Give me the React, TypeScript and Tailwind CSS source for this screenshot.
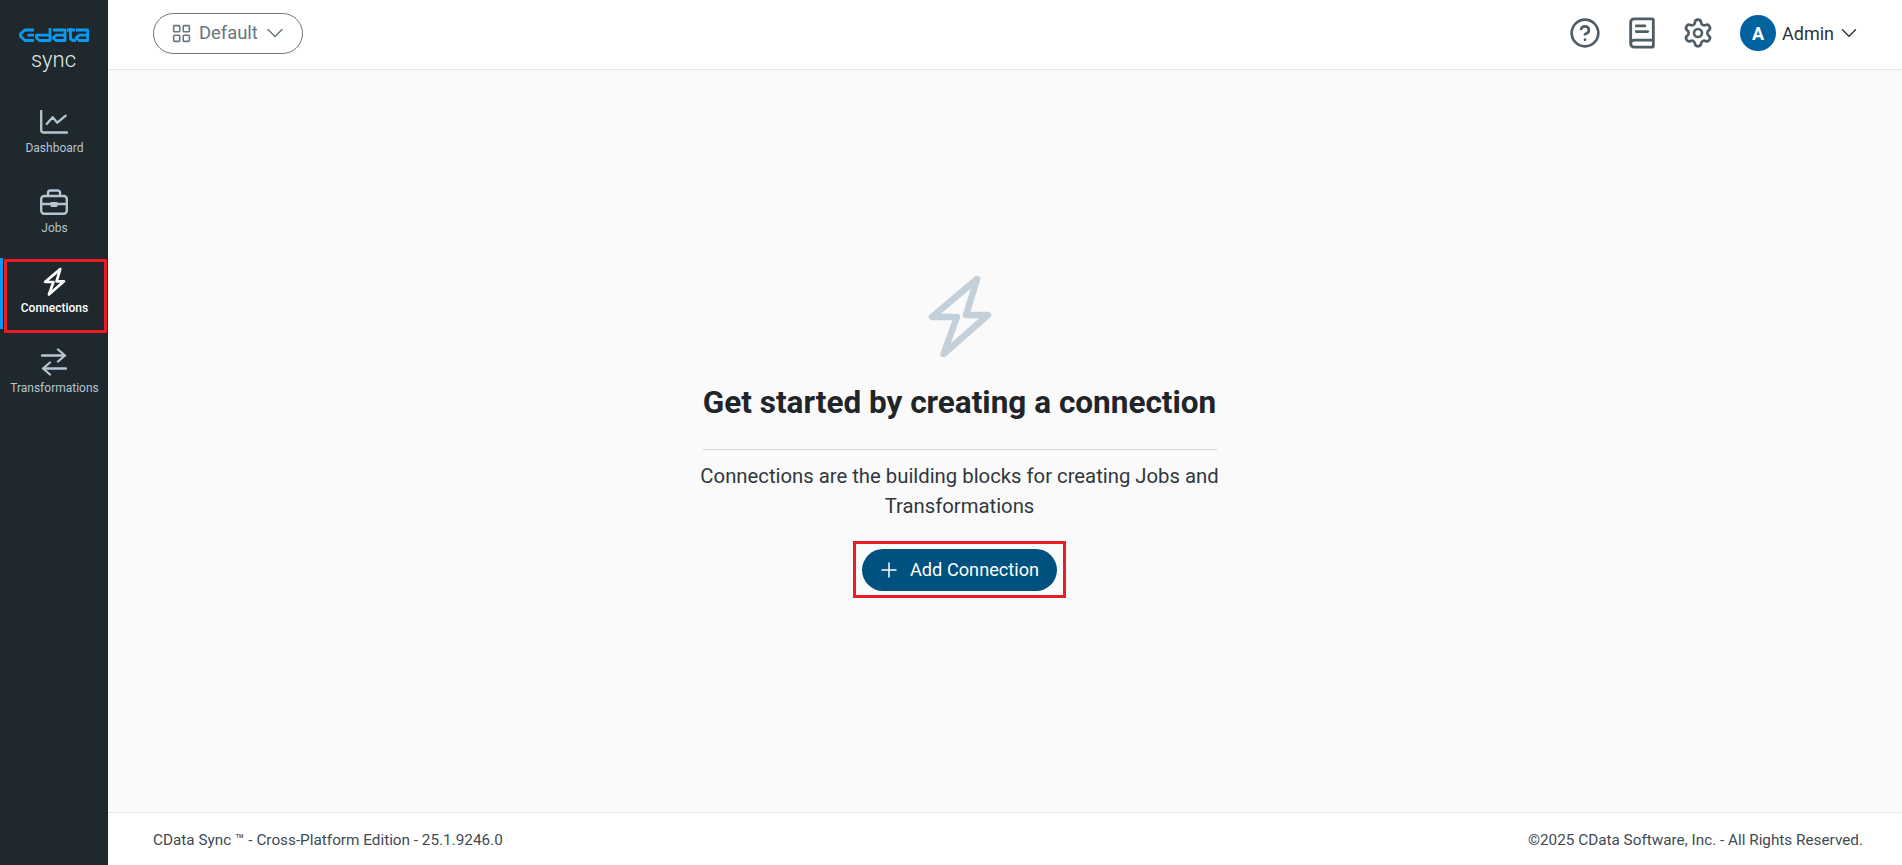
import React from 'react';
import { ChevronDown, CircleHelp, BookText, Settings, LayoutGrid, Plus } from 'lucide-react';

const BoltIcon = ({ className, strokeWidth }: { className: string; strokeWidth: number }) => (
  <svg viewBox="0 0 68 88" fill="none" stroke="currentColor" strokeWidth={strokeWidth} strokeLinejoin="round" className={className}>
    <path d="M51 6 L6 44 H31 L17.5 81 L62 42 H40 Z" />
  </svg>
);

const DashIcon = () => (
  <svg viewBox="0 0 28 24" fill="none" stroke="currentColor" strokeWidth="2.3" strokeLinecap="round" strokeLinejoin="round" className="w-[28px] h-[24px]">
    <path d="M1.2 1v19a2.5 2.5 0 0 0 2.5 2.5H27" />
    <path d="M6.7 14l6-6.7 4.6 5.4 8.4-7" />
  </svg>
);

const JobsIcon = () => (
  <svg viewBox="0 0 28 26" fill="none" stroke="currentColor" strokeWidth="2.4" strokeLinejoin="round" className="w-[28px] h-[26px]">
    <rect x="1.2" y="7" width="25.6" height="17.8" rx="3" />
    <path d="M8 7V4a2.5 2.5 0 0 1 2.5-2.5h7A2.5 2.5 0 0 1 20 4v3" />
    <path d="M1.2 15H11M17 15h9.8" />
    <rect x="11" y="13.5" width="6" height="4" fill="currentColor" strokeWidth="1" />
  </svg>
);

const TransformIcon = () => (
  <svg viewBox="0 0 26 28" fill="none" stroke="currentColor" strokeWidth="2.3" strokeLinecap="round" strokeLinejoin="round" className="w-[26px] h-[28px]">
    <path d="M1 7.5h23M17 1.5l7 6-7 6" />
    <path d="M25 20.5H2M9 14.5l-7 6 7 6" />
  </svg>
);

const CDataLogo = () => (
  <svg viewBox="0 0 70 14" fill="none" stroke="#0a9bf0" strokeWidth="2.8" strokeLinejoin="round" className="w-[70px] h-[14px]">
    <path d="M15 2H6L1.5 5.8v2.4L6 12.5h9M15 7.2H8.5" />
    <path d="M31 0V12.5H20.5L17.5 10V7.2H31" />
    <path d="M34 2H46V12.5H37L34 10l3-2.8h9" />
    <path d="M48 2h8M51.5 0v10.5l2 2H57" />
    <path d="M57 2H68.6V12.5H60L57 10l3-2.8h8.6" />
  </svg>
);

const navItems = [
  { label: 'Dashboard', icon: <DashIcon /> },
  { label: 'Jobs', icon: <JobsIcon /> },
  { label: 'Connections', icon: <BoltIcon className="w-[23px] h-[30px]" strokeWidth={8} />, active: true },
  { label: 'Transformations', icon: <TransformIcon /> },
];

const App: React.FC = () => {
  return (
    <div className="flex h-screen bg-[#fafafa] font-['Roboto',sans-serif] overflow-hidden">
      <aside className="w-[108px] shrink-0 bg-[#1f282c] flex flex-col">
        <div className="h-[92px] flex flex-col items-center pt-[28px]">
          <CDataLogo />
          <div className="mt-[4px] text-[22px] leading-[28px] font-light text-[#e6eaed] pr-[1px]">sync</div>
        </div>
        <nav className="flex flex-col">
          {navItems.map((item) => (
            <div
              key={item.label}
              className={item.active
                ? 'relative h-[80px] flex flex-col items-center justify-center text-white font-medium'
                : 'relative h-[80px] flex flex-col items-center justify-center text-[#b4c5d3]'}
            >
              {item.active && <div className="absolute left-0 top-[6px] w-[3px] h-[71px] bg-[#0a9bf0]" />}
              {item.active && <div className="absolute left-[4px] top-[7px] w-[103px] h-[74px] border-[3px] border-[#ed1c24]" />}
              <div className="h-[30px] flex items-center justify-center">{item.icon}</div>
              <span className="text-[12px] leading-[18px] mt-[2px] pl-[1px]">{item.label}</span>
            </div>
          ))}
        </nav>
      </aside>

      <div className="flex-1 flex flex-col min-w-0">
        <header className="h-[70px] shrink-0 bg-white border-b border-[#e3e5e7] flex items-center justify-between pl-[45px] pr-[40px] pb-[3px]">
          <button className="h-[41px] w-[150px] rounded-full border border-[#6c757d] flex items-center pl-[17px] text-[#667680] text-[18.4px]">
            <LayoutGrid size={21} strokeWidth={1.75} />
            <span className="ml-[7px]">Default</span>
            <ChevronDown size={28} strokeWidth={1.25} className="ml-[3px]" />
          </button>
          <div className="flex items-center">
            <CircleHelp size={32} strokeWidth={2} className="text-[#4f5d66]" />
            <BookText size={34} strokeWidth={2} className="text-[#4f5d66] ml-[24px]" />
            <Settings size={32} strokeWidth={2} className="text-[#4f5d66] ml-[23px]" />
            <div className="ml-[26px] w-[36px] h-[36px] rounded-full bg-[#00629f] text-white font-bold text-[18px] flex items-center justify-center">A</div>
            <span className="ml-[6px] text-[18px] text-[#2c3338]">Admin</span>
            <ChevronDown size={26} strokeWidth={1.3} className="ml-[2px] text-[#2c3338]" />
          </div>
        </header>

        <main className="flex-1 flex flex-col items-center pt-[203px] pr-[91px]">
          <BoltIcon className="w-[68px] h-[88px] text-[#c3d0da]" strokeWidth={6.5} />
          <h1 className="mt-[22px] text-[31.5px] leading-[40px] font-bold text-[#1f2529] whitespace-nowrap">Get started by creating a connection</h1>
          <div className="mt-[26px] w-[514px] h-px bg-[#d3d6d9]" />
          <p className="mt-[11px] w-[540px] text-center text-[20.3px] leading-[30px] text-[#30383d]">
            Connections are the building blocks for creating Jobs and Transformations
          </p>
          <div className="mt-[20px] border-[3px] border-[#ed1c24] px-[6px] pt-[5px] pb-[4px]">
            <button className="h-[42px] w-[195px] rounded-full bg-[#005180] text-white text-[18.2px] flex items-center pl-[15px] gap-[9px]">
              <Plus size={24} strokeWidth={1.5} />
              <span>Add Connection</span>
            </button>
          </div>
        </main>

        <footer className="h-[53px] shrink-0 bg-white border-t border-[#e3e5e7] flex items-center justify-between pl-[45px] pr-[39px] pt-[2px] text-[15.3px] text-[#3f4a52]">
          <span>CData Sync ™ - Cross-Platform Edition - 25.1.9246.0</span>
          <span>©2025 CData Software, Inc. - All Rights Reserved.</span>
        </footer>
      </div>
    </div>
  );
};

export default App;
